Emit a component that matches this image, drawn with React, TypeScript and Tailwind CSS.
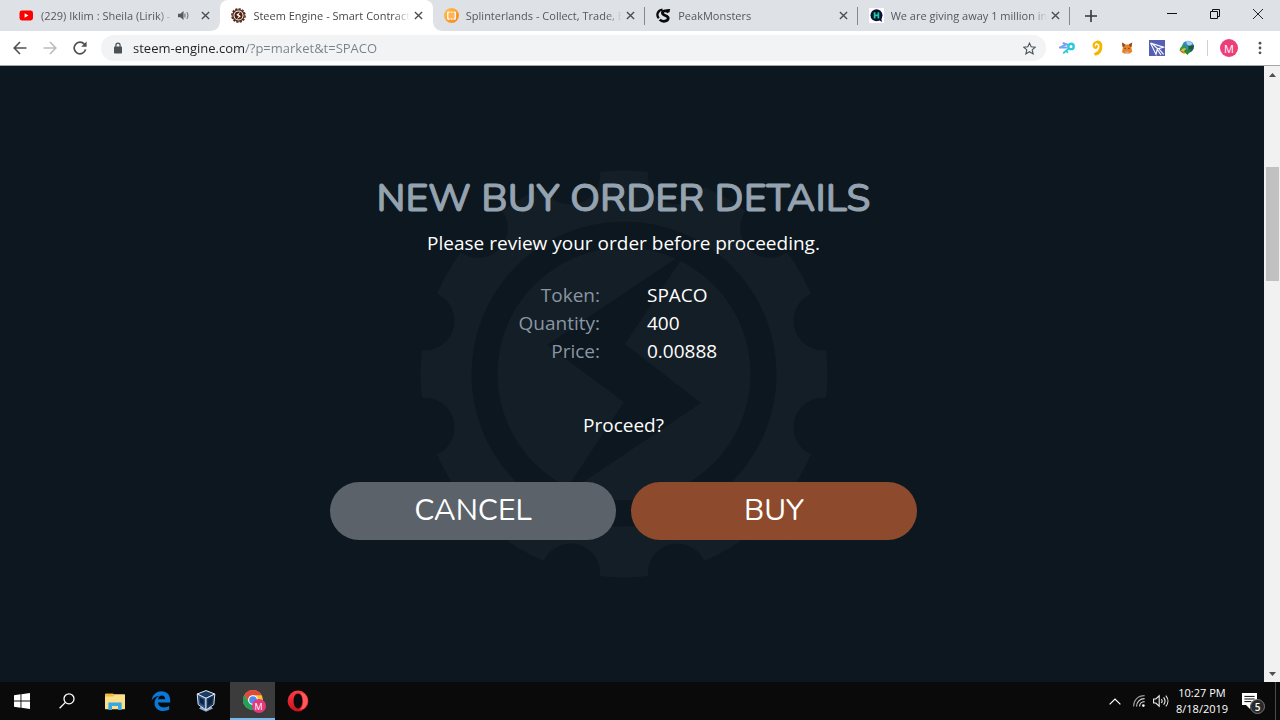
import { useState } from 'react'
import type { ReactNode } from 'react'

interface TabItem {
  id: string
  title: string
  icon: ReactNode
  audible?: boolean
}

interface IconProps {
  className?: string
}

function YoutubeIcon() {
  return (
    <svg viewBox="0 0 15 15" className="size-[15px] shrink-0">
      <rect x="0.5" y="2.5" width="13.5" height="10" rx="2.4" fill="#f00" />
      <path d="M5.6 5.3v4.4l3.8-2.2z" fill="#fff" />
    </svg>
  )
}

function SteemEngineIcon() {
  return (
    <svg viewBox="0 0 16 16" className="size-[15px] shrink-0">
      <circle cx="8" cy="8" r="7.1" fill="none" stroke="#4f2212" strokeWidth="1.5" strokeDasharray="2.4 1.3" />
      <circle cx="8" cy="8" r="6" fill="none" stroke="#4f2212" strokeWidth="1.3" />
      <circle cx="8" cy="8" r="4.3" fill="#4f2212" />
      <path d="M10.2 4 5.6 7.2l2.6 1.9L6 12l4.6-3.1L8 7z" fill="#fff" />
    </svg>
  )
}

function SplinterlandsIcon() {
  return (
    <svg viewBox="0 0 16 16" className="size-[15px] shrink-0">
      <defs>
        <linearGradient id="splinter" x1="0" y1="0" x2="1" y2="1">
          <stop offset="0" stopColor="#ffc64a" />
          <stop offset="1" stopColor="#f5811f" />
        </linearGradient>
      </defs>
      <circle cx="8" cy="8" r="8" fill="url(#splinter)" />
      <rect x="4" y="4.4" width="8" height="7.4" rx="0.6" fill="#fbb45a" stroke="#fff" strokeWidth="1.4" />
      <path d="M6 4.2h1.2M9 4.2h1.2M6 12h1.2M9 12h1.2" stroke="#f9a63a" strokeWidth="1.6" />
    </svg>
  )
}

function PeakMonstersIcon() {
  return (
    <svg viewBox="0 0 16 16" className="size-[15px] shrink-0" fill="none" stroke="#0a0a0a">
      <path d="M7 1.8C1.6 2.4 0 7.6 3 11" strokeWidth="2.4" />
      <path d="M13.4 4.6C11.5 2.2 6.8 2.8 6.8 5.4c0 3 6.6 2.2 6.2 5.6-.4 3.4-6 4.4-9 1.4" strokeWidth="3" />
      <path d="M10.6 1.2 15.2 1 14 5z" fill="#0a0a0a" stroke="none" />
    </svg>
  )
}

function HiveIcon() {
  return (
    <svg viewBox="0 0 16 16" className="size-[15px] shrink-0">
      <rect width="16" height="16" fill="#fff" />
      <circle cx="8" cy="7.8" r="6.4" fill="#0d1038" />
      <path d="M10 12.5 13.8 15 13 10z" fill="#0d1038" />
      <path d="M6 4.6v6.6M10 4.6v6.6M6 7.9h4" stroke="#1fcf9b" strokeWidth="1.9" />
    </svg>
  )
}

function CloseIcon({ className = 'size-[9px]' }: IconProps) {
  return (
    <svg viewBox="0 0 10 10" className={className} fill="none" stroke="currentColor" strokeWidth="1.5">
      <path d="M1 1l8 8M9 1 1 9" />
    </svg>
  )
}

const TABS: TabItem[] = [
  { id: 'youtube', title: '(229) Iklim : Sheila (Lirik) -', icon: <YoutubeIcon />, audible: true },
  { id: 'steem', title: 'Steem Engine - Smart Contract', icon: <SteemEngineIcon /> },
  { id: 'splinter', title: 'Splinterlands - Collect, Trade, B', icon: <SplinterlandsIcon /> },
  { id: 'peak', title: 'PeakMonsters', icon: <PeakMonstersIcon /> },
  { id: 'giveaway', title: 'We are giving away 1 million in', icon: <HiveIcon /> },
]

const ORDER = [
  { label: 'Token:', value: 'SPACO' },
  { label: 'Quantity:', value: '400' },
  { label: 'Price:', value: '0.00888' },
]

function Tab({ tab, active, divider, onSelect }: { tab: TabItem; active: boolean; divider: boolean; onSelect: () => void }) {
  return (
    <div className={`relative flex h-[31px] min-w-0 flex-1 items-center pr-[10px] pl-[11px] ${active ? 'rounded-t-lg bg-white' : ''}`}>
      {active ? (
        <>
          <span className="absolute bottom-0 -left-2 size-2 bg-[radial-gradient(circle_at_0_0,transparent_7px,#fff_8px)]" />
          <span className="absolute -right-2 bottom-0 size-2 bg-[radial-gradient(circle_at_100%_0,transparent_7px,#fff_8px)]" />
        </>
      ) : null}
      <button type="button" onClick={onSelect} className="flex min-w-0 flex-1 items-center gap-[7px] text-left">
        {tab.icon}
        <span
          className={`min-w-0 flex-1 overflow-hidden text-[11px] leading-4 whitespace-nowrap [mask-image:linear-gradient(to_right,#000_calc(100%-16px),transparent)] ${
            active ? 'text-[#45494d]' : 'text-[#54585d]'
          }`}
        >
          {tab.title}
        </span>
      </button>
      {tab.audible ? (
        <svg viewBox="0 0 12 12" className="mr-2 ml-1 size-[11px] shrink-0 text-[#55595e]" fill="none" stroke="currentColor">
          <path d="M0 4h2.6L6 1v10L2.6 8H0z" fill="currentColor" stroke="none" />
          <path d="M7.6 3.8v4.4M9.6 2.2c1.6 2 1.6 5.6 0 7.6" />
        </svg>
      ) : null}
      <button type="button" aria-label={`Close ${tab.title}`} className="ml-1 shrink-0 text-[#4a4e52]">
        <CloseIcon />
      </button>
      {divider ? <span className="absolute right-0 h-[18px] w-px bg-[#85898e]" /> : null}
    </div>
  )
}

function TabStrip() {
  const [activeId, setActiveId] = useState('steem')
  const activeIndex = TABS.findIndex((tab) => tab.id === activeId)

  return (
    <div className="flex h-[31px] bg-[#dee1e6] pl-2">
      <div className="flex max-w-[1062px] min-w-0 flex-1">
        {TABS.map((tab, index) => (
          <Tab
            key={tab.id}
            tab={tab}
            active={index === activeIndex}
            divider={index !== activeIndex && index !== activeIndex - 1}
            onSelect={() => setActiveId(tab.id)}
          />
        ))}
      </div>
      <button type="button" aria-label="New tab" className="flex w-[42px] items-center justify-center text-[#33373b]">
        <svg viewBox="0 0 12 12" className="size-3" stroke="currentColor" strokeWidth="1.6">
          <path d="M6 0v12M0 6h12" />
        </svg>
      </button>
      <div className="ml-auto flex h-[27px] text-[#111]">
        <button type="button" aria-label="Minimize" className="flex w-[43px] items-center justify-center">
          <span className="h-px w-[10px] bg-[#111]" />
        </button>
        <button type="button" aria-label="Restore" className="flex w-[43px] items-center justify-center">
          <svg viewBox="0 0 10 10" className="size-[10px]" fill="none" stroke="currentColor">
            <path d="M.5 2.5h7v7h-7zM2.5 2.5v-2h7v7h-2" />
          </svg>
        </button>
        <button type="button" aria-label="Close window" className="flex w-[44px] items-center justify-center">
          <svg viewBox="0 0 10 10" className="size-[10px]" stroke="currentColor" strokeWidth="0.9">
            <path d="M0 0l10 10M10 0 0 10" />
          </svg>
        </button>
      </div>
    </div>
  )
}

function Extensions() {
  return (
    <div className="flex items-center gap-[14px]">
      <button type="button" aria-label="Keychain">
        <svg viewBox="0 0 16 16" className="size-4" fill="none" strokeLinecap="round">
          <path d="M8.6 4.6 4.4 3.2M7 7.4.8 7.6" stroke="#8795f0" strokeWidth="2" />
          <path d="M6.6 4.6 2.4 6.8" stroke="#6fa8f2" strokeWidth="2" />
          <circle cx="12" cy="6.4" r="2.7" stroke="#27cbe0" strokeWidth="2.4" />
          <path d="m9.6 8.6-4.8 4.2M7.4 10.8l1 1.4" stroke="#27cbe0" strokeWidth="1.8" />
        </svg>
      </button>
      <button type="button" aria-label="Ear">
        <svg viewBox="0 0 16 16" className="size-4" fill="none" stroke="#f7b500" strokeLinecap="round">
          <path d="M8.6 2C12 2.4 12.4 6 11.6 9c-.7 2.6-2.4 4.4-5 5" strokeWidth="3" />
          <path d="M8.4 2C4.6 1.8 3.6 5.6 5.6 7.6c1.4.6 2.2 0 2.2-1.6" strokeWidth="2.2" />
        </svg>
      </button>
      <button type="button" aria-label="MetaMask">
        <svg viewBox="0 0 16 16" className="size-4">
          <path d="m3 2.6 3.2 2h3.6l3.4-2-.8 5 .8 4.2-2.6 1.6H5.2L3 12.2l.8-4.4z" fill="#e8822a" />
          <path d="m3 2.6 3.2 2L5 7 3.6 6.6zM13.2 2.6l-3.4 2L11 7l1.6-.6z" fill="#8b4a22" />
          <path d="M6.6 11.4h2.8l.4 2H6.2z" fill="#c9b3a4" />
          <path d="M5.6 8.4h1M9.4 8.4h1" stroke="#40210f" />
        </svg>
      </button>
      <button type="button" aria-label="Send">
        <svg viewBox="0 0 16 16" className="size-4">
          <rect width="16" height="16" fill="#5560b4" />
          <path d="M1.5 3 14.5 7.2 9.6 8.6l5 5.8M1.5 3 7 14.4 8.2 9.4 12 15M3 3.6 9 9" fill="none" stroke="#fff" strokeWidth="1.1" />
        </svg>
      </button>
      <button type="button" aria-label="Download manager">
        <svg viewBox="0 0 16 16" className="size-4">
          <circle cx="9" cy="6.8" r="6" fill="#3c7fd0" />
          <path d="M7 1.4c3-1 5.4.4 6.6 2.6L10.8 6 8 4.6z" fill="#9ed0ea" />
          <path d="M9.4 6 14.8 5c.4 3.4-1.6 7-5.4 7.6z" fill="#1d5b35" />
          <path d="M.6 10.6C1 6 4.4 4.2 7.6 5.6L7 8.4c-2.6-1-4 .2-4.6 3z" fill="#2f9d3c" />
          <path d="M2 11.4c.6-2.6 2.6-3.8 5-2.8v2l2.8.2-4.6 3.4z" fill="#e2c02c" />
          <path d="M6 9.4h6.4L8.6 15 5 11.8z" fill="#258a37" />
          <path d="M.6 10.6 3.4 13l2-1z" fill="#d2452c" />
        </svg>
      </button>
    </div>
  )
}

function Toolbar() {
  const [address, setAddress] = useState('steem-engine.com/?p=market&t=SPACO')

  return (
    <div className="flex h-[35px] items-center border-b border-[#a4a7aa] bg-white pr-[18px] pl-[13px] text-[#4d5156]">
      <div className="flex w-[88px] shrink-0 gap-4">
        <button type="button" aria-label="Back">
          <svg viewBox="0 0 14 14" className="size-[14px]" fill="none" stroke="currentColor" strokeWidth="1.6">
            <path d="M13.5 7H1.5M7 1 1.2 7 7 13" />
          </svg>
        </button>
        <button type="button" aria-label="Forward" className="text-[#b9bcbf]">
          <svg viewBox="0 0 14 14" className="size-[14px]" fill="none" stroke="currentColor" strokeWidth="1.6">
            <path d="M.5 7h12M7 1l5.8 6L7 13" />
          </svg>
        </button>
        <button type="button" aria-label="Reload">
          <svg viewBox="0 0 14 14" className="size-[14px]" fill="none" stroke="currentColor" strokeWidth="1.7">
            <path d="M12.6 8.4A5.8 5.8 0 1 1 11.4 3.2" />
            <path d="M13.6.4v5.4H8.2z" fill="currentColor" stroke="none" />
          </svg>
        </button>
      </div>
      <div className="flex h-[26px] min-w-0 flex-1 items-center rounded-full bg-[#f1f3f4] pr-[10px] pl-3">
        <svg viewBox="0 0 10 12" className="mr-[10px] h-3 w-[10px] shrink-0" fill="none" stroke="currentColor">
          <rect x="1" y="4.6" width="8" height="7" rx="0.8" fill="currentColor" stroke="none" />
          <path d="M2.9 5V3.2a2.1 2.1 0 0 1 4.2 0V5" strokeWidth="1.2" />
        </svg>
        <input
          aria-label="Address"
          value={address}
          onChange={(event) => setAddress(event.target.value)}
          className="min-w-0 flex-1 bg-[linear-gradient(to_right,#202124_112px,#7b8085_112px)] bg-clip-text text-[13px] leading-5 text-transparent caret-[#202124] outline-none"
        />
        <button type="button" aria-label="Bookmark this page">
          <svg viewBox="0 0 14 14" className="size-[13px]" fill="none" stroke="currentColor" strokeWidth="1.2">
            <path d="m7 1.2 1.8 4 4.4.4-3.3 2.9 1 4.3L7 10.5l-3.9 2.3 1-4.3L.8 5.6l4.4-.4z" />
          </svg>
        </button>
      </div>
      <div className="ml-[13px] flex shrink-0 items-center">
        <Extensions />
        <span className="mx-3 h-4 w-px bg-[#d0d2d5]" />
        <button
          type="button"
          aria-label="Profile"
          className="flex size-[18px] items-center justify-center rounded-full bg-[#ec3f7a] text-[11px] leading-none text-white"
        >
          M
        </button>
        <button type="button" aria-label="Menu" className="ml-5">
          <svg viewBox="0 0 4 14" className="h-[14px] w-1" fill="currentColor">
            <circle cx="2" cy="2.2" r="1.4" />
            <circle cx="2" cy="7" r="1.4" />
            <circle cx="2" cy="11.8" r="1.4" />
          </svg>
        </button>
      </div>
    </div>
  )
}

const NOTCHES = Array.from({ length: 12 }, (_, index) => {
  const angle = ((15 + index * 30) * Math.PI) / 180
  return { x: 204 + 206 * Math.cos(angle), y: 204 + 206 * Math.sin(angle) }
})

function GearWatermark() {
  return (
    <svg viewBox="0 0 408 408" className="absolute size-[408px]" aria-hidden="true">
      <circle cx="204" cy="204" r="203.5" fill="#141e26" />
      {NOTCHES.map((notch) => (
        <circle key={`${notch.x}-${notch.y}`} cx={notch.x} cy={notch.y} r="29.5" fill="#0d171f" />
      ))}
      <circle cx="204" cy="204" r="139.5" fill="none" stroke="#0d171f" strokeWidth="26" />
      <path d="M267 81 127 175l77 57-63 95 140-94-76-59z" fill="#0d171f" />
    </svg>
  )
}

function OrderDialog() {
  return (
    <main className="relative flex min-w-0 flex-1 items-center justify-center overflow-hidden bg-[#0d171f] pr-[17px] text-white">
      <GearWatermark />
      <section
        aria-labelledby="order-title"
        className="relative flex w-full max-w-[587px] flex-col items-center pt-[5px] pb-[38px] text-[19px] leading-7"
      >
        <h1
          id="order-title"
          className="font-['Nunito',Lato,sans-serif] text-[39px] leading-[48px] font-medium whitespace-nowrap text-[#95a3b0] [-webkit-text-stroke:1px_#95a3b0]"
        >
          NEW BUY ORDER DETAILS
        </h1>
        <p className="mt-[6px]">Please review your order before proceeding.</p>
        <dl className="mt-6 grid w-full grid-cols-2 gap-x-[47px]">
          {ORDER.map((row) => (
            <div key={row.label} className="col-span-2 grid grid-cols-subgrid">
              <dt className="text-right text-[#8996a2]">{row.label}</dt>
              <dd>{row.value}</dd>
            </div>
          ))}
        </dl>
        <p className="mt-[46px]">Proceed?</p>
        <div className="mt-[43px] grid w-full grid-cols-2 gap-[15px] font-['Nunito',Lato,sans-serif] text-[30px]">
          <button type="button" className="h-[58px] rounded-full bg-[#5b6269]">
            CANCEL
          </button>
          <button type="button" className="h-[58px] rounded-full bg-[#8d4a2c]">
            BUY
          </button>
        </div>
      </section>
    </main>
  )
}

function Scrollbar() {
  return (
    <div className="flex w-4 shrink-0 flex-col items-center bg-[#f1f1f1]">
      <button type="button" aria-label="Scroll up" className="flex h-[17px] items-center">
        <svg viewBox="0 0 7 4" className="h-1 w-[7px]" fill="#505050">
          <path d="M0 4h7L3.5 0z" />
        </svg>
      </button>
      <div className="flex w-full flex-1 flex-col items-center pt-[84px]">
        <div className="h-[114px] w-[13px] bg-[#c1c1c1]" />
      </div>
      <button type="button" aria-label="Scroll down" className="flex h-[17px] items-center">
        <svg viewBox="0 0 7 4" className="h-1 w-[7px]" fill="#505050">
          <path d="M0 0h7L3.5 4z" />
        </svg>
      </button>
    </div>
  )
}

function Taskbar() {
  return (
    <footer className="flex h-[38px] shrink-0 bg-[#0a0a0a] text-white">
      <button type="button" aria-label="Start" className="flex w-[44px] items-center justify-center">
        <svg viewBox="0 0 16 16" className="size-4" fill="#fff">
          <path d="M0 2.2 6.5 1.3v6.2H0zM7.4 1.2 16 0v7.5H7.4zM0 8.4h6.5v6.3L0 13.8zM7.4 8.4H16V16l-8.6-1.2z" />
        </svg>
      </button>
      <button type="button" aria-label="Search" className="mr-0.5 flex w-[46px] items-center justify-center">
        <svg viewBox="0 0 16 16" className="size-4" fill="none" stroke="#fff" strokeWidth="1.3">
          <circle cx="10" cy="5.8" r="5" />
          <path d="M6.4 9.4.6 15.2" />
        </svg>
      </button>
      <button type="button" aria-label="File Explorer" className="flex w-[46px] items-center justify-center">
        <svg viewBox="0 0 20 17" className="h-[17px] w-5">
          <path d="M0 1.4Q0 .4 1 .4h7l1.4 1.4H0z" fill="#e8a91c" />
          <rect y="1.2" width="20" height="15" rx="0.6" fill="#fbdf8b" />
          <path d="M0 3.6V1.2h8.2L9 2.4l-.8 1.2z" fill="#f2bb33" />
          <path d="M3.4 17V9.6h13.2V17H13v-4H7v4z" fill="#35a8e4" />
        </svg>
      </button>
      <button type="button" aria-label="Edge" className="flex w-[46px] items-center justify-center">
        <svg viewBox="0 0 20 20" className="size-5" fill="#0a78d6">
          <path d="M.6 9.4C1.4 3.6 5.4.2 10.4.2c5.4 0 8.8 3.8 8.8 9v2.4H7c.2 3.2 2.8 4.8 6 4.8 2 0 3.8-.5 5.2-1.4v3.6c-1.8 1-3.8 1.4-6 1.4-5.2 0-8.6-3-8.6-7.8 0-3.4 1.8-6 4.8-7.4C4.8 5.2 2 7 .6 9.4zm6.6-1.2h7c0-2.4-1.2-3.8-3.2-3.8-2.2 0-3.6 1.6-3.8 3.8z" />
        </svg>
      </button>
      <button type="button" aria-label="VirtualBox" className="flex w-[44px] items-center justify-center">
        <svg viewBox="0 0 20 22" className="h-[22px] w-5">
          <path d="M6 15.4h8l3 3.2-7 3.2-7-3.2z" fill="#8fa9c6" />
          <path d="M10 .6 18.8 4 10 8.4 1.2 4z" fill="#1d3c63" stroke="#e6eef6" />
          <path d="M1.2 4 10 8.4V20l-7.8-5.4z" fill="#2a5284" stroke="#dce6f0" />
          <path d="M18.8 4 10 8.4V20l7.8-5.4z" fill="#173355" stroke="#dce6f0" />
          <path d="m3.6 7.6 4.2 2.2v5.4l-3.6-2.4zM16.4 7.6l-4.2 2.2v5.4l3.6-2.4z" fill="#0c2140" />
        </svg>
      </button>
      <button
        type="button"
        aria-label="Chrome"
        className="ml-0.5 flex w-[45px] items-center justify-center border-b-2 border-[#76b9ed] bg-[#3c3c3c]"
      >
        <span className="relative">
          <svg viewBox="0 0 20 20" className="size-5">
            <circle cx="10" cy="10" r="10" fill="#f7c62e" />
            <path d="M1.3 5A10 10 0 0 1 18.7 5.2H10a4.8 4.8 0 0 0-4.2 7.2z" fill="#dd4b3e" />
            <path d="M1.3 5A10 10 0 0 0 10 20l4.2-7.6A4.8 4.8 0 0 1 5.8 12.4z" fill="#1fa15d" />
            <circle cx="10" cy="10" r="4.8" fill="#fff" />
            <circle cx="10" cy="10" r="3.8" fill="#4a8af4" />
          </svg>
          <span className="absolute -right-[3px] -bottom-[3px] flex size-[14px] items-center justify-center rounded-full bg-[#e5377d] text-[9px] leading-none">
            M
          </span>
        </span>
      </button>
      <button type="button" aria-label="Opera" className="flex w-[46px] items-center justify-center">
        <svg viewBox="0 0 22 22" className="size-[22px]">
          <defs>
            <linearGradient id="opera" x1="0" y1="0" x2="0" y2="1">
              <stop offset="0" stopColor="#ff3b45" />
              <stop offset="1" stopColor="#c8101f" />
            </linearGradient>
          </defs>
          <path
            d="M11 .6a10.4 10.4 0 1 0 0 20.8 10.4 10.4 0 0 0 0-20.8zm0 3c2.8 0 4.4 3.4 4.4 7.4s-1.6 7.4-4.4 7.4-4.4-3.4-4.4-7.4 1.6-7.4 4.4-7.4z"
            fill="url(#opera)"
            fillRule="evenodd"
          />
          <path d="M13 2.4c4.4 0 7.6 3.8 7.6 8.6s-3.2 8.6-7.6 8.6c2-1.6 3-4.8 3-8.6s-1-7-3-8.6z" fill="#ff5a57" />
        </svg>
      </button>

      <div className="ml-auto flex items-center">
        <button type="button" aria-label="Show hidden icons">
          <svg viewBox="0 0 12 7" className="h-[7px] w-3" fill="none" stroke="#fff" strokeWidth="1.2">
            <path d="M.6 6.4 6 1l5.4 5.4" />
          </svg>
        </button>
        <button type="button" aria-label="Network" className="ml-3">
          <svg viewBox="0 0 12 12" className="size-3" fill="none" stroke="#d5d5d5" strokeWidth="1.1">
            <path d="M.6 11.4C.6 5 5 .6 11.6.6" stroke="#9b9b9b" />
            <path d="M3.6 11.4c0-4.6 3.2-7.8 8-7.8M6.6 11.4c0-2.8 2-4.8 5-4.8" />
            <circle cx="10.4" cy="10.6" r="1.3" fill="#fff" stroke="none" />
          </svg>
        </button>
        <button type="button" aria-label="Volume" className="ml-2">
          <svg viewBox="0 0 16 14" className="h-[14px] w-4" fill="none" stroke="#eee" strokeWidth="1.1">
            <path d="M.6 5h2.2L6.2 1.8v10.4L2.8 9H.6z" />
            <path d="M8.4 5c.9 1.2.9 2.8 0 4M10.6 3.4c1.8 2.2 1.8 5 0 7.2M12.8 1.6c2.8 3.2 2.8 7.6 0 10.8" />
          </svg>
        </button>
        <button type="button" className="ml-[7px] w-[52px] text-center text-[11px] leading-4 whitespace-nowrap">
          10:27 PM
          <br />
          8/18/2019
        </button>
        <button type="button" aria-label="Notifications" className="relative mr-[18px] ml-[14px]">
          <svg viewBox="0 0 15 16" className="h-4 w-[15px]">
            <path d="M0 0h15v12H8v4l-4-4H0z" fill="#fff" />
            <path d="M2.4 3.4h10.2M2.4 6h10.2M2.4 8.6h7" stroke="#0a0a0a" />
          </svg>
          <span className="absolute -right-2 -bottom-[5px] flex size-[15px] items-center justify-center rounded-full border border-[#777] bg-[#2a2a2a] text-[10px] leading-none font-semibold">
            5
          </span>
        </button>
        <span className="mr-1 h-[38px] w-px bg-[#4a4a4a]" />
      </div>
    </footer>
  )
}

function App() {
  return (
    <div className="flex h-screen flex-col overflow-hidden font-['Open_Sans','Noto_Sans',sans-serif]">
      <header className="shrink-0">
        <TabStrip />
        <Toolbar />
      </header>
      <div className="flex min-h-0 flex-1">
        <OrderDialog />
        <Scrollbar />
      </div>
      <Taskbar />
    </div>
  )
}

export default App
